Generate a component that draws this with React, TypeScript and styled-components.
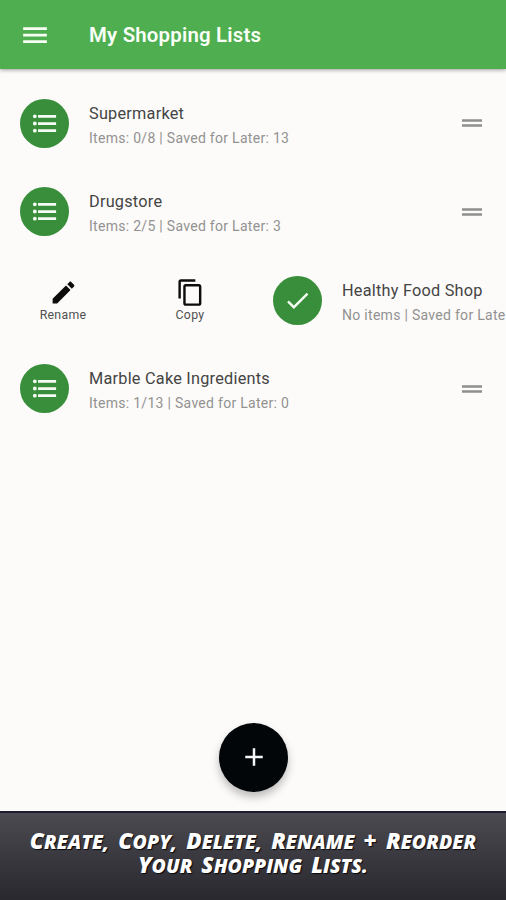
import React from "react";
import styled, { createGlobalStyle } from "styled-components";

const GlobalStyle = createGlobalStyle`
  * { box-sizing: border-box; }
  body { margin: 0; background: #fcfbf9; }
`;

const Screen = styled.div`
  width: 506px;
  height: 900px;
  overflow: hidden;
  display: flex;
  flex-direction: column;
  background: #fcfbf9;
  font-family: Roboto, "Liberation Sans", sans-serif;
`;

const AppBar = styled.header`
  flex: none;
  height: 69px;
  padding-left: 20px;
  display: flex;
  align-items: center;
  gap: 39px;
  background: #4eae50;
  box-shadow: 0 1px 4px rgba(0, 0, 0, 0.38);
  z-index: 1;
`;

const PlainButton = styled.button`
  border: 0;
  padding: 0;
  background: none;
  display: flex;
  color: inherit;
  font: inherit;
`;

const MenuButton = styled(PlainButton)`
  color: #f7fff5;
`;

const Title = styled.h1`
  margin: 0;
  color: #f9fff7;
  font-size: 20.4px;
  font-weight: 600;
  line-height: 28px;
  letter-spacing: 0.2px;
`;

const Lists = styled.main`
  flex: 1;
  padding-top: 10px;
`;

const Row = styled.div`
  height: 88.5px;
  padding: 0 20px;
  display: flex;
  align-items: center;
`;

const Avatar = styled.div`
  flex: none;
  width: 49px;
  height: 49px;
  margin-right: 20px;
  border-radius: 50%;
  display: flex;
  align-items: center;
  justify-content: center;
  background: #388e3a;
  color: #f4fbf2;
`;

const Labels = styled.div`
  flex: 1 0 auto;
  white-space: nowrap;
  padding-top: 6px;
`;

const Name = styled.div`
  color: #444;
  font-size: 16.3px;
  line-height: 24px;
  letter-spacing: 0.23px;
`;

const Detail = styled.div`
  color: #929291;
  font-size: 14px;
  line-height: 25px;
  letter-spacing: 0.29px;
`;

const Action = styled(PlainButton)<{ $width: number }>`
  flex: none;
  width: ${(p) => p.$width}px;
  flex-direction: column;
  align-items: center;
  color: #0c0c0c;
`;

const ActionLabel = styled.span`
  margin-top: 1px;
  color: #505050;
  font-size: 12.3px;
  line-height: 14px;
  letter-spacing: 0.3px;
`;

const SwipedRow = styled(Row)`
  padding: 0;
`;

const Actions = styled.div`
  flex: none;
  width: 273px;
  display: flex;
`;

const FabArea = styled.div`
  flex: none;
  height: 88px;
  display: flex;
  justify-content: center;
`;

const Fab = styled(PlainButton)`
  width: 69px;
  height: 69px;
  padding: 0 0 1px 1px;
  border-radius: 50%;
  align-items: center;
  justify-content: center;
  background: #020609;
  color: #f6f6f6;
  box-shadow: 0 5px 9px rgba(0, 0, 0, 0.26);
`;

const Banner = styled.footer`
  flex: none;
  height: 89px;
  padding-top: 16px;
  border-top: 2px solid #1c1b30;
  background: linear-gradient(#4b4a51, #29282e);
  color: #fff;
  font-family: "Open Sans", sans-serif;
  font-size: 19.5px;
  font-weight: 800;
  font-style: italic;
  text-transform: uppercase;
  white-space: nowrap;
  text-shadow: 1px 1px 1px #08080c;
`;

const CaptionLine = styled.div<{ $spacing: number }>`
  height: 24px;
  display: flex;
  justify-content: center;
  gap: 9px;
  line-height: 24px;
  letter-spacing: ${(p) => p.$spacing}px;
`;

const Word = styled.span`
  display: block;
  &::first-letter { font-size: 22.5px; line-height: 24px; }
`;

const Caption = ({ text, spacing }: { text: string; spacing: number }) => (
  <CaptionLine $spacing={spacing}>
    {text.split(" ").map((word) => <Word key={word}>{word}</Word>)}
  </CaptionLine>
);

const Icon = ({ size, d }: { size: number; d: string }) => (
  <svg width={size} height={size} viewBox="0 0 24 24" fill="currentColor" aria-hidden="true">
    <path d={d} />
  </svg>
);

const paths = {
  menu: "M2.5 18.3h19v-2.2h-19zM2.5 13.1h19v-2.2h-19zM2.5 5.7v2.2h19V5.7z",
  list: "M2.4 6.1a1.6 1.6 0 1 0 3.2 0 1.6 1.6 0 1 0-3.2 0M6.6 5h15v2.3h-15zM2.4 12a1.6 1.6 0 1 0 3.2 0 1.6 1.6 0 1 0-3.2 0M6.6 10.9h15v2.3h-15zM2.4 17.9a1.6 1.6 0 1 0 3.2 0 1.6 1.6 0 1 0-3.2 0M6.6 16.8h15v2.3h-15z",
  check: "M9 16.17L4.83 12l-1.42 1.41L9 19 21 7l-1.41-1.41z",
  drag: "M20 9H4v2h16V9zM4 15h16v-2H4v2z",
  edit: "M3 17.25V21h3.75L17.81 9.94l-3.75-3.75L3 17.25zM20.71 7.04c.39-.39.39-1.02 0-1.41l-2.34-2.34c-.39-.39-1.02-.39-1.41 0l-1.83 1.83 3.75 3.75 1.83-1.83z",
  copy: "M16 1H4c-1.1 0-2 .9-2 2v14h2V3h12V1zm3 4H8c-1.1 0-2 .9-2 2v14c0 1.1.9 2 2 2h11c1.1 0 2-.9 2-2V7c0-1.1-.9-2-2-2zm0 16H8V7h11v14z",
  add: "M19 13h-6v6h-2v-6H5v-2h6V5h2v6h6v2z",
};

const DragHandle = styled.div`
  display: flex;
  margin-right: -1px;
  color: #8f8f8e;
`;

const ListRow = ({ name, detail }: { name: string; detail: string }) => (
  <Row>
    <Avatar><Icon size={29} d={paths.list} /></Avatar>
    <Labels>
      <Name>{name}</Name>
      <Detail>{detail}</Detail>
    </Labels>
    <DragHandle><Icon size={30} d={paths.drag} /></DragHandle>
  </Row>
);

export default function App() {
  return (
    <Screen>
      <GlobalStyle />
      <AppBar>
        <MenuButton aria-label="Menu"><Icon size={30} d={paths.menu} /></MenuButton>
        <Title>My Shopping Lists</Title>
      </AppBar>
      <Lists>
        <ListRow name="Supermarket" detail="Items: 0/8 | Saved for Later: 13" />
        <ListRow name="Drugstore" detail="Items: 2/5 | Saved for Later: 3" />
        <SwipedRow>
          <Actions>
            <Action $width={126}>
              <Icon size={29} d={paths.edit} />
              <ActionLabel>Rename</ActionLabel>
            </Action>
            <Action $width={128}>
              <Icon size={29} d={paths.copy} />
              <ActionLabel>Copy</ActionLabel>
            </Action>
          </Actions>
          <Avatar><Icon size={29} d={paths.check} /></Avatar>
          <Labels>
            <Name>Healthy Food Shop</Name>
            <Detail>No items | Saved for Later: 0</Detail>
          </Labels>
        </SwipedRow>
        <ListRow name="Marble Cake Ingredients" detail="Items: 1/13 | Saved for Later: 0" />
      </Lists>
      <FabArea>
        <Fab aria-label="Add list"><Icon size={30} d={paths.add} /></Fab>
      </FabArea>
      <Banner>
        <Caption text="Create, Copy, Delete, Rename + Reorder" spacing={0.1} />
        <Caption text="Your Shopping Lists." spacing={0} />
      </Banner>
    </Screen>
  );
}
